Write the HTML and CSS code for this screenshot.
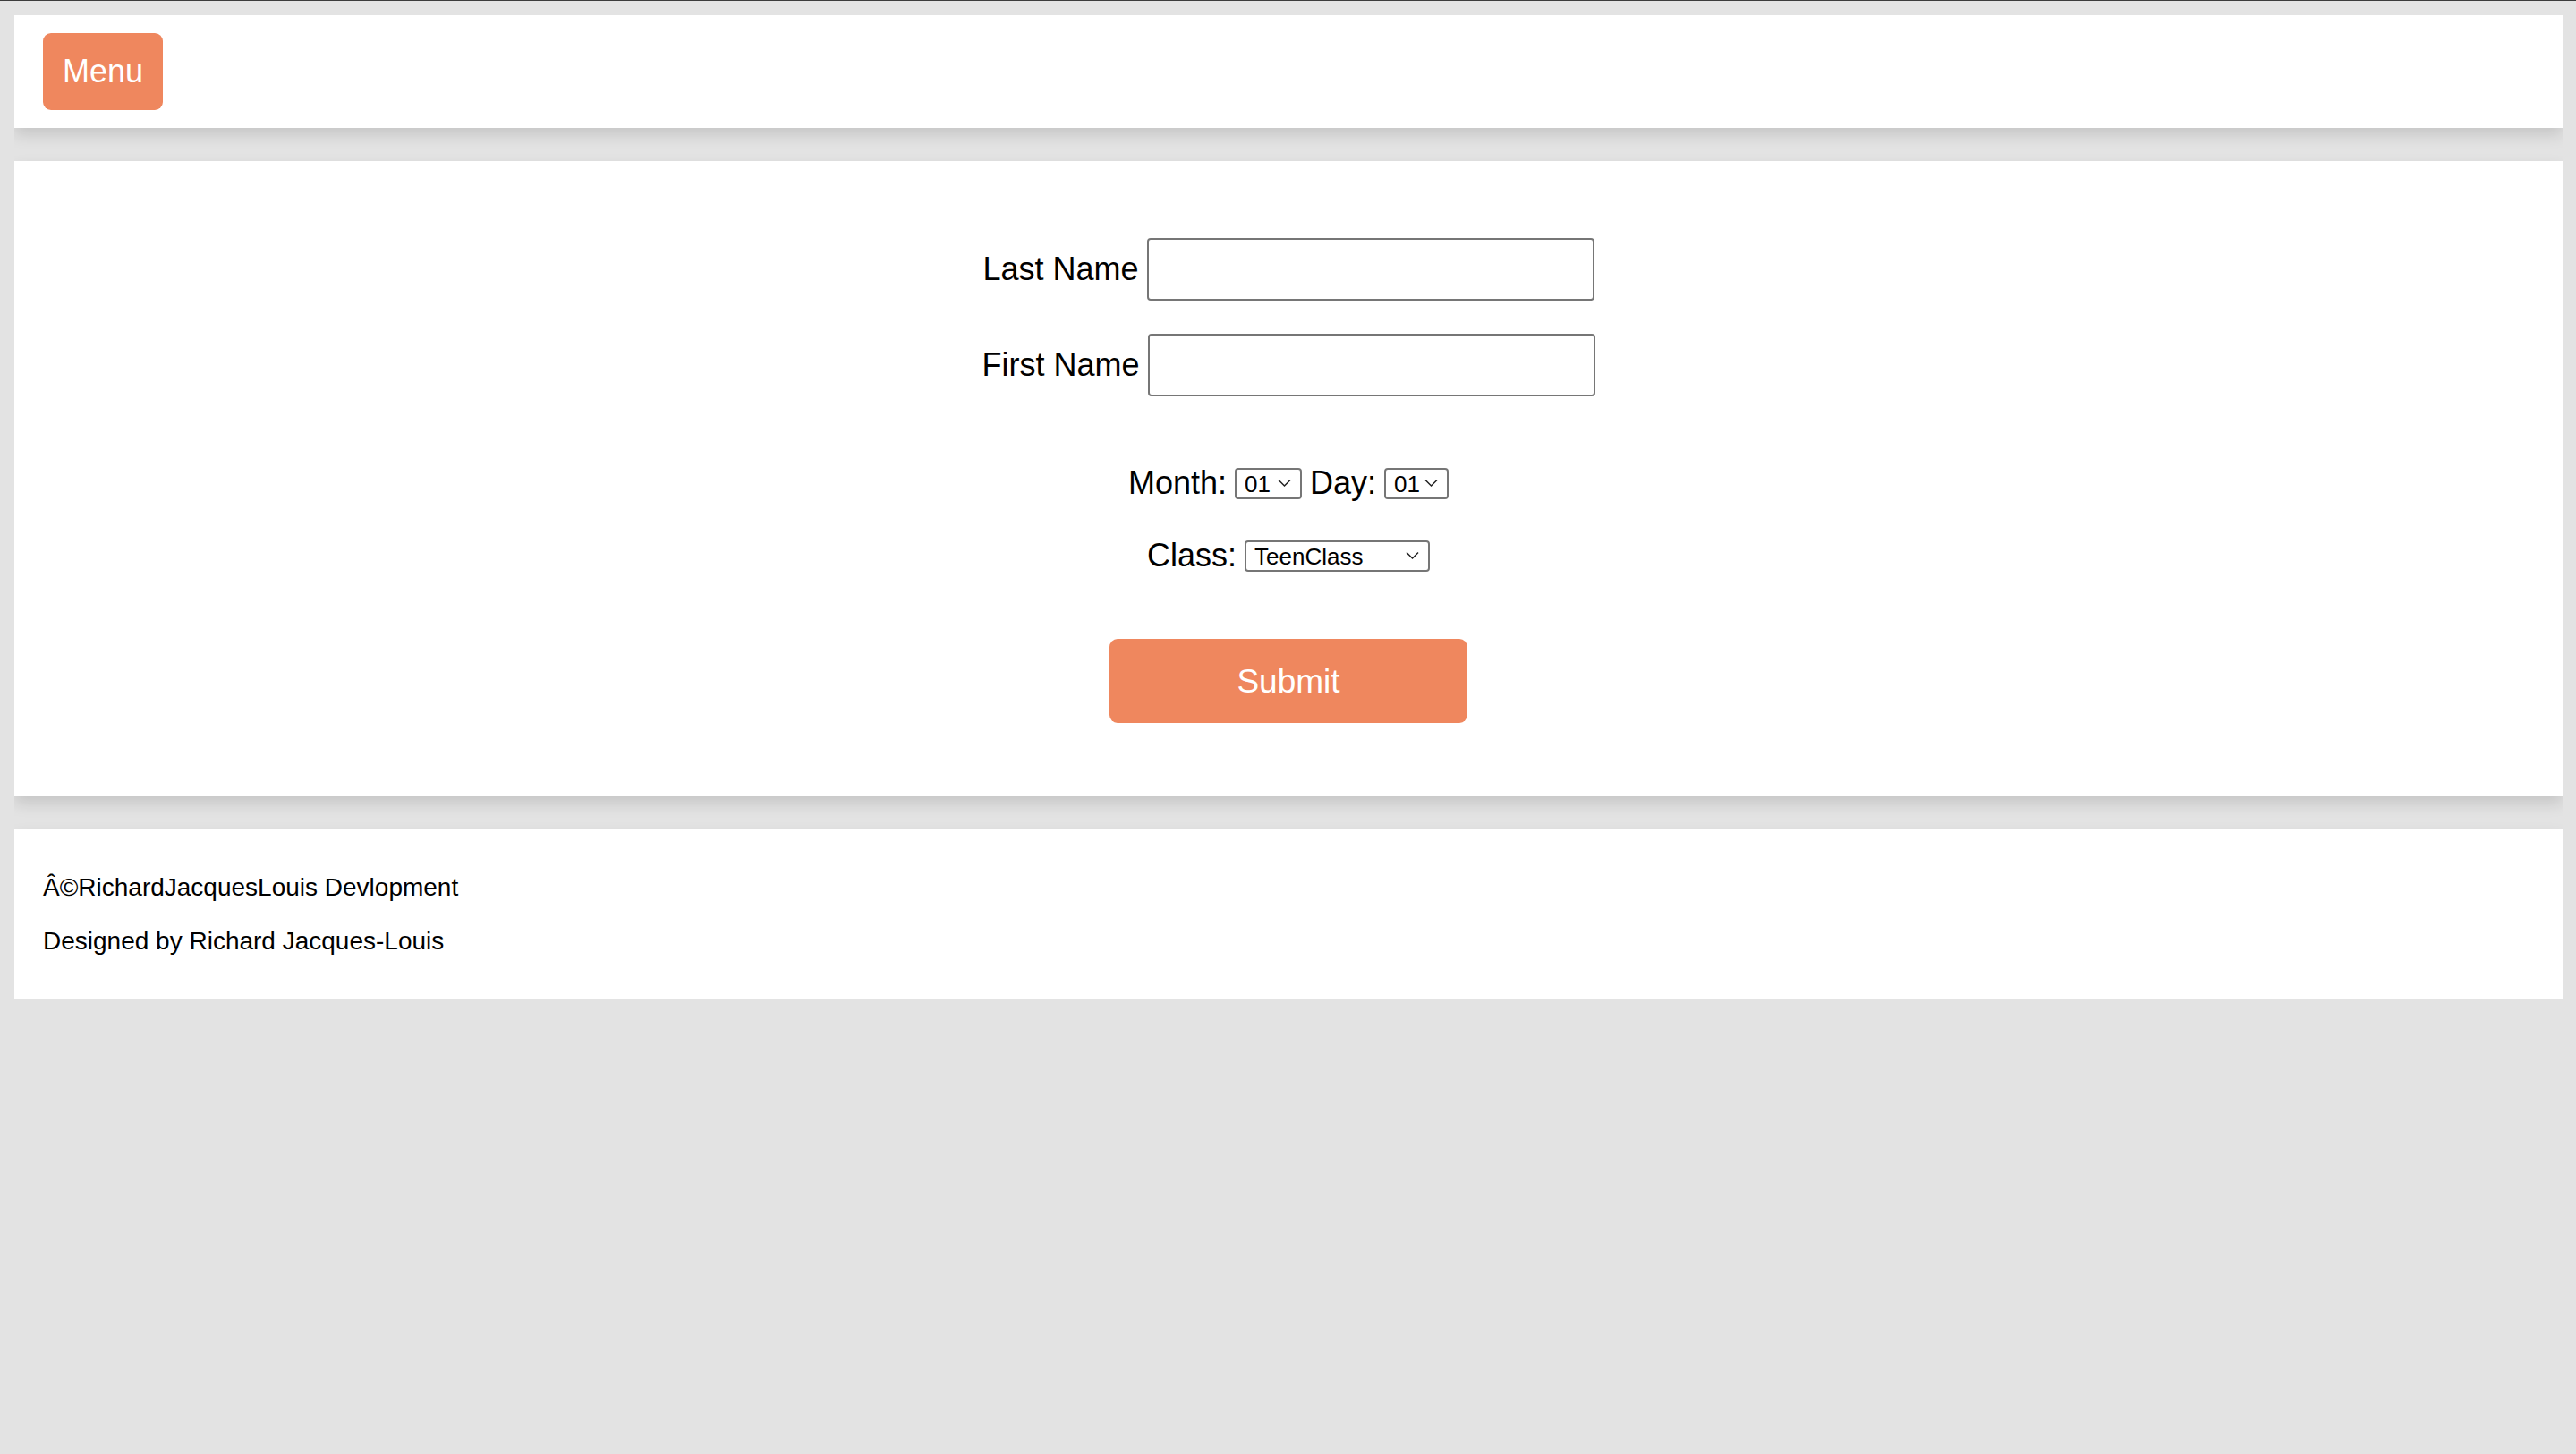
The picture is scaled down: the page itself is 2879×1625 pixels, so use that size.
FILE: index.html
```html
<!DOCTYPE html>
<html lang="en">
    <head>
        <meta charset="utf-8">
        <meta name="viewport" content="width=device-width, initial-scale=1">
        <title>Class Registration</title>
        <link rel="stylesheet" href="styles.css">
    </head>
    <body>

    <!--Header Start-->
    <header class="topbar">
        <button class="menuButton" type="button">Menu</button>
    </header>
    <!--Header Ending-->

    <!--Form Start-->
    <main class="card">
        <form class="signup" action="#" method="post">
            <div class="field">
                <label for="lname">Last Name</label>
                <input type="text" id="lname" name="lname">
            </div>
            <div class="field">
                <label for="fname">First Name</label>
                <input type="text" id="fname" name="fname">
            </div>

            <div class="pick pick--date">
                <label for="month">Month:</label>
                <select id="month" name="month" class="monthSelect">
                    <option>01</option><option>02</option><option>03</option><option>04</option>
                    <option>05</option><option>06</option><option>07</option><option>08</option>
                    <option>09</option><option>10</option><option>11</option><option>12</option>
                </select>
                <label for="day">Day:</label>
                <select id="day" name="day" class="daySelect">
                    <option>01</option><option>02</option><option>03</option><option>04</option>
                    <option>05</option><option>06</option><option>07</option><option>08</option>
                    <option>09</option><option>10</option><option>11</option><option>12</option>
                    <option>13</option><option>14</option><option>15</option><option>16</option>
                    <option>17</option><option>18</option><option>19</option><option>20</option>
                    <option>21</option><option>22</option><option>23</option><option>24</option>
                    <option>25</option><option>26</option><option>27</option><option>28</option>
                    <option>29</option><option>30</option><option>31</option>
                </select>
            </div>

            <div class="pick pick--class">
                <label for="klass">Class:</label>
                <select id="klass" name="klass" class="classSelect">
                    <option>TeenClass</option>
                    <option>KidsClass</option>
                    <option>AdultClass</option>
                </select>
            </div>

            <button class="submitButton" type="submit">Submit</button>
        </form>
    </main>
    <!--Form Ending-->

    <!--Footer Start-->
    <footer class="card footer">
        <p>Â©RichardJacquesLouis Devlopment</p>
        <p>Designed by Richard Jacques-Louis</p>
    </footer>
    <!--Footer Ending-->

    </body>
</html>
```

FILE: styles.css
```css
html {
   box-sizing: border-box;
   background: #e3e3e3;
   border-top: 1px solid #3c3c3c;
   font-family: "Liberation Sans", Arial, Helvetica, sans-serif;
}

*,
*:before,
*:after {
   box-sizing: inherit;
}

body {
   margin: 16px 15px 16px 16px;
   color: #000;
}

.topbar,
.card {
   background: white;
   box-shadow: 0 8px 16px rgba(0, 0, 0, 0.13);
}

.topbar {
   padding: 20px 32px;
}

.menuButton {
   width: 134px;
   height: 86px;
   background-color: #ef875e;
   color: white;
   border: none;
   border-radius: 9px;
   font-family: inherit;
   font-size: 36px;
}

.card {
   margin-top: 37px;
}

.signup {
   display: flex;
   flex-direction: column;
   align-items: center;
   padding: 86px 0 82px;
}

.field {
   display: flex;
   align-items: center;
   gap: 9px;
   margin-bottom: 37px;
}

.field:last-of-type {
   margin-bottom: 0;
}

label {
   font-size: 36px;
}

.field input {
   width: 500px;
   height: 70px;
   border: 2px solid #767676;
   border-radius: 4px;
   font-size: 28px;
   padding: 0 8px;
}

.pick {
   display: flex;
   align-items: center;
   gap: 9px;
   height: 42px;
}

.pick--date {
   margin-top: 39px;
}

.pick--class {
   margin-top: 39px;
}

select {
   -webkit-appearance: none;
   appearance: none;
   font-family: inherit;
   font-size: 26px;
   height: 35px;
   padding: 1px 30px 0 9px;
   border: 2px solid #767676;
   border-radius: 4px;
   color: black;
   background: white url("data:image/svg+xml;utf8,<svg xmlns='http://www.w3.org/2000/svg' width='16' height='10' viewBox='0 0 16 10'><path d='M1.5 1.5 L8 8 L14.5 1.5' fill='none' stroke='%23222' stroke-width='1.5'/></svg>") no-repeat right 9px center;
   background-size: 17px 10px;
}

.monthSelect {
   width: 75px;
}

.daySelect {
   width: 72px;
}

.classSelect {
   width: 207px;
}

.submitButton {
   margin-top: 72px;
   width: 400px;
   height: 94px;
   padding-top: 3px;
   background-color: #ef875e;
   color: white;
   border: none;
   border-radius: 9px;
   font-family: inherit;
   font-size: 37px;
}

.footer {
   padding: 21px 32px;
}

.footer p {
   margin: 27px 0;
   font-size: 28px;
   line-height: 33px;
}
```
